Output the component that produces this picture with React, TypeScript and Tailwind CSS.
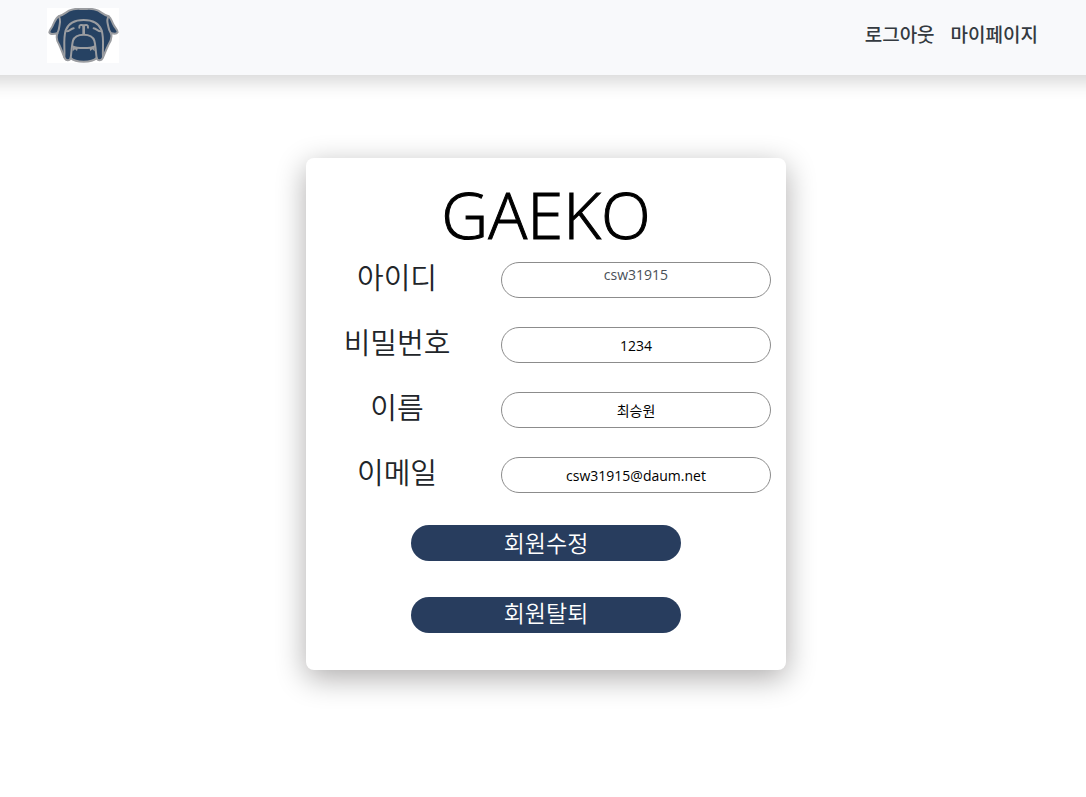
import React from "react";

type Field = {
  id: string;
  label: string;
  value: string;
  type: string;
  readOnly?: boolean;
};

const fields: Field[] = [
  { id: "user-id", label: "아이디", value: "csw31915", type: "text", readOnly: true },
  { id: "password", label: "비밀번호", value: "1234", type: "text" },
  { id: "name", label: "이름", value: "최승원", type: "text" },
  { id: "email", label: "이메일", value: "csw31915@daum.net", type: "email" },
];

function DogLogo() {
  return (
    <svg viewBox="0 0 216 165" className="block h-[55px] w-[72px] bg-white" role="img" aria-label="GAEKO">
      <g stroke="#9b9da1" strokeWidth="6" strokeLinejoin="round" strokeLinecap="round">
        <path
          fill="#264263"
          d="M35 25 C48 22 55 15 66 8 C82 0 94 3 110 3 C126 3 138 0 154 8 C165 15 172 22 185 25 C193 30 193 38 200 51 C204 60 212 65 212 73 C208 80 202 77 192 76 C196 88 192 99 184 111 C178 123 174 134 168 148 C163 160 152 159 149 150 C134 165 86 165 71 150 C68 159 57 160 52 148 C46 134 43 123 37 111 C29 99 27 88 31 76 C20 79 10 81 7 73 C7 65 14 62 18 51 C24 38 26 30 35 25 Z"
        />
        <path fill="none" d="M35 25 C43 35 38 46 37 56 C36 65 34 70 31 76 M185 25 C177 35 182 46 184 56 C185 65 188 70 192 76" />
        <path fill="none" d="M52 148 C54 118 48 96 56 67 C64 46 84 36 110 36 C136 36 156 46 164 67 C172 96 166 118 168 148" />
        <path fill="none" d="M60 70 C67 70 72 62 80 61 M160 70 C153 70 148 62 140 61" />
        <path fill="none" d="M71 150 C74 130 74 112 78 98 C83 83 95 80 110 80 C125 80 137 83 142 98 C146 112 146 130 149 150" />
        <path fill="none" d="M77 115 C90 122 130 122 143 115" />
        <path fill="none" d="M97 59 C96 49 103 51 110 52 C117 51 124 49 123 59" />
        <path fill="none" strokeWidth="8" d="M110 55 V77" />
      </g>
      <path fill="#9b9da1" d="M77 114 L93 119 L90 129 L84 124 L77 130 Z M143 114 L127 119 L130 129 L136 124 L143 130 Z" />
    </svg>
  );
}

export default function App() {
  return (
    <div className="min-h-screen overflow-x-hidden bg-white font-['Open_Sans','Noto_Sans_CJK_KR',sans-serif] text-[#212529]">
      <header className="-mx-8 flex h-[75px] items-start justify-between bg-[#f8f9fb] px-20 pt-2 shadow-[0_8px_16px_rgba(0,0,0,0.15)]">
        <a href="#home" className="-ml-px block">
          <DogLogo />
        </a>
        <nav className="flex gap-4 pt-[13px] text-[19px] leading-7 font-medium text-[#343a40]">
          <a href="#logout">로그아웃</a>
          <a href="#mypage">마이페이지</a>
        </nav>
      </header>

      <main className="flex justify-center pt-[83px] pl-[6px]">
        <form
          className="w-[480px] rounded-lg bg-white pt-[14px] pb-[37px] shadow-[0_8px_30px_rgba(10,4,0,0.33)]"
          onSubmit={(e) => e.preventDefault()}
        >
          <h1 className="mb-[6px] text-center text-[65px] leading-[84px] font-light text-black [-webkit-text-stroke:1px_#000]">GAEKO</h1>

          <div className="flex flex-col gap-[29px]">
            {fields.map((f) => (
              <div key={f.id} className="flex h-9 items-start gap-[13px] pr-[15px]">
                <label htmlFor={f.id} className="w-[182px] text-center text-[29px] leading-8 font-[350]">
                  {f.label}
                </label>
                <input
                  id={f.id}
                  type={f.type}
                  defaultValue={f.value}
                  readOnly={f.readOnly}
                  className={
                    f.readOnly
                      ? "h-9 min-w-0 flex-1 rounded-full border border-[#8c8c8c] bg-white px-4 pb-3 text-center text-[14px] text-[#495057]"
                      : "h-9 min-w-0 flex-1 rounded-full border border-[#8c8c8c] bg-white px-4 text-center text-[14px] text-black"
                  }
                />
              </div>
            ))}
          </div>

          <div className="mt-8 flex flex-col items-center gap-9">
            <button type="submit" className="h-9 w-[270px] rounded-full bg-[#283d5e] text-[23px] leading-8 font-[350] text-white">
              회원수정
            </button>
            <button type="button" className="h-9 w-[270px] rounded-full bg-[#283d5e] pb-1 text-[23px] leading-8 font-[350] text-white">
              회원탈퇴
            </button>
          </div>
        </form>
      </main>
    </div>
  );
}
